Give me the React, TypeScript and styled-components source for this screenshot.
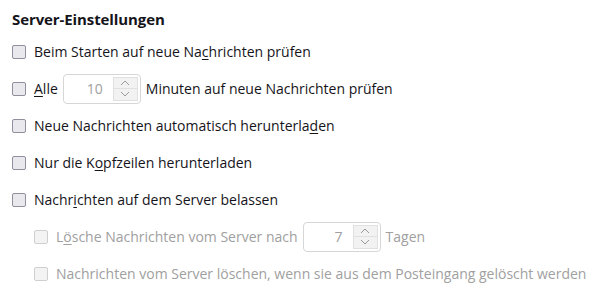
import React from "react";
import styled, { createGlobalStyle } from "styled-components";

const Global = createGlobalStyle`
  html, body { margin: 0; padding: 0; background: #ffffff; }
  body { font-family: "Open Sans", "Noto Sans", sans-serif; color: #15141a; }
`;

const Page = styled.div`
  display: flex;
  flex-direction: column;
  padding: 8px 12px 0 12px;
`;

const Heading = styled.h1`
  margin: 0 0 3px 0;
  font-size: 15px;
  font-weight: 700;
  line-height: 22px;
  letter-spacing: -0.1px;
`;

const Row = styled.label<{ $indent?: boolean; $disabled?: boolean }>`
  display: flex;
  align-items: center;
  gap: 5px;
  height: 37px;
  padding-left: ${(p) => (p.$indent ? "22px" : "0")};
  font-size: 14px;
  color: ${(p) => (p.$disabled ? "#a0a0a0" : "#15141a")};
`;

const Box = styled.span<{ $disabled?: boolean }>`
  flex: none;
  width: 14px;
  height: 14px;
  box-sizing: border-box;
  border: 1px solid ${(p) => (p.$disabled ? "#cfcfcf" : "#8f8f9d")};
  border-radius: 2px;
  background: ${(p) => (p.$disabled ? "#f3f3f3" : "#e9e9ed")};
  margin-right: 3px;
`;

const Spin = styled.span`
  flex: none;
  display: flex;
  width: 78px;
  height: 30px;
  box-sizing: border-box;
  border: 1px solid #d6d6d6;
  border-radius: 4px;
  background: #fff;
  padding: 2px;
`;

const SpinValue = styled.span`
  flex: 1;
  display: flex;
  align-items: center;
  justify-content: flex-end;
  padding-right: 10px;
  font-size: 14px;
  color: #a0a0a0;
`;

const SpinButtons = styled.span`
  flex: none;
  width: 25px;
  display: flex;
  flex-direction: column;
  gap: 1px;
  background: #e0e0e0;
  border: 1px solid #e0e0e0;
  box-sizing: border-box;
`;

const SpinButton = styled.span`
  flex: 1;
  display: flex;
  align-items: center;
  justify-content: center;
  background: #f2f2f2;
`;

const U = styled.span`
  text-decoration: underline;
  text-underline-offset: 2px;
`;

const Arrow = ({ up }: { up?: boolean }) => (
  <svg width="10" height="6" viewBox="0 0 10 6">
    <path
      d={up ? "M1 5 L5 1 L9 5" : "M1 1 L5 5 L9 1"}
      fill="none"
      stroke="#9a9a9a"
      strokeWidth="1"
    />
  </svg>
);

const Spinner = ({ value }: { value: string }) => (
  <Spin>
    <SpinValue>{value}</SpinValue>
    <SpinButtons>
      <SpinButton>
        <Arrow up />
      </SpinButton>
      <SpinButton>
        <Arrow />
      </SpinButton>
    </SpinButtons>
  </Spin>
);

export default function App() {
  return (
    <>
      <Global />
      <Page>
        <Heading>Server-Einstellungen</Heading>
        <Row>
          <Box />
          <span>
            Beim Starten auf neue Na<U>c</U>hrichten prüfen
          </span>
        </Row>
        <Row>
          <Box />
          <span>
            <U>A</U>lle
          </span>
          <Spinner value="10" />
          <span>Minuten auf neue Nachrichten prüfen</span>
        </Row>
        <Row>
          <Box />
          <span>
            Neue Nachrichten automatisch herunterla<U>d</U>en
          </span>
        </Row>
        <Row>
          <Box />
          <span>
            Nur die K<U>o</U>pfzeilen herunterladen
          </span>
        </Row>
        <Row>
          <Box />
          <span>
            Nachr<U>i</U>chten auf dem Server belassen
          </span>
        </Row>
        <Row $indent $disabled>
          <Box $disabled />
          <span>
            L<U>ö</U>sche Nachrichten vom Server nach
          </span>
          <Spinner value="7" />
          <span>Tagen</span>
        </Row>
        <Row $indent $disabled>
          <Box $disabled />
          <span>
            Nachrichten vom Server löschen, wenn sie aus dem Postein<U>g</U>ang
            gelöscht werden
          </span>
        </Row>
      </Page>
    </>
  );
}
